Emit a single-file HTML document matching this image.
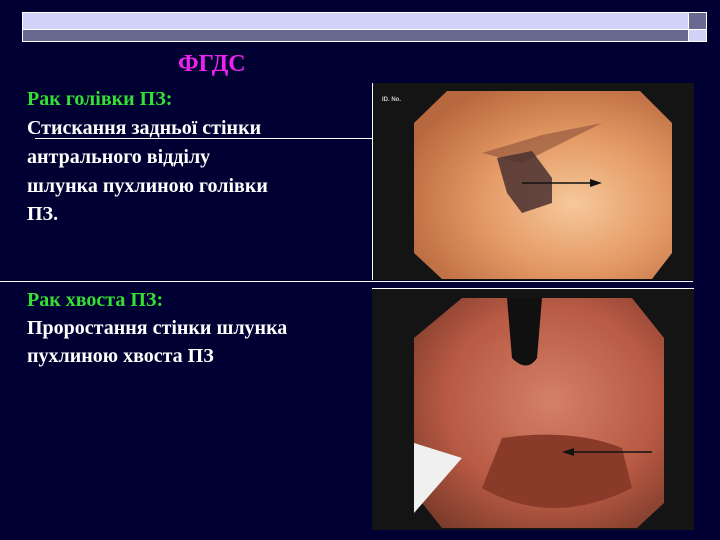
<!DOCTYPE html>
<html><head><meta charset="utf-8"><style>
body{margin:0;width:720px;height:540px;background:#000033;position:relative;overflow:hidden;font-family:"Liberation Serif","DejaVu Serif",serif;font-weight:bold}
.a{position:absolute}
.t{position:absolute;left:27px;font-size:20px;color:#fff;white-space:nowrap;line-height:22px}
.g{color:#33e033}
</style></head><body>
<div class="a" style="left:22px;top:12px;width:685px;height:30px;border:1px solid #fff;box-sizing:border-box;background:#686890"></div>
<div class="a" style="left:23px;top:13px;width:665px;height:16px;background:#d2d2f8"></div>
<div class="a" style="left:23px;top:29px;width:683px;height:1px;background:#fff"></div>
<div class="a" style="left:688px;top:13px;width:1px;height:28px;background:#fff"></div>
<div class="a" style="left:689px;top:13px;width:17px;height:16px;background:#686890"></div>
<div class="a" style="left:689px;top:30px;width:17px;height:11px;background:#d2d2f8"></div>

<div class="a" style="left:178px;top:51px;font-size:24px;color:#ee22ee">ФГДС</div>

<div class="t g" style="top:88px">Рак голівки ПЗ:</div>
<div class="t" style="top:117px">Стискання задньої стінки</div>
<div class="a" style="left:35px;top:138px;width:337px;height:1px;background:#fff"></div>
<div class="t" style="top:146px">антрального відділу</div>
<div class="t" style="top:175px">шлунка пухлиною голівки</div>
<div class="t" style="top:203px">ПЗ.</div>
<div class="a" style="left:0;top:281px;width:693px;height:1px;background:#fff"></div>
<div class="t g" style="top:289px">Рак хвоста ПЗ:</div>
<div class="t" style="top:317px">Проростання стінки шлунка</div>
<div class="t" style="top:345px">пухлиною хвоста ПЗ</div>

<svg class="a" style="left:372px;top:83px" width="322" height="197" viewBox="0 0 322 197">
<defs><radialGradient id="r1" cx="0.62" cy="0.6" r="0.7"><stop offset="0" stop-color="#f6c89a"/><stop offset="0.5" stop-color="#e49a66"/><stop offset="1" stop-color="#b8683e"/></radialGradient></defs>
<rect width="322" height="197" fill="#141414"/>
<rect x="0" width="1" height="197" fill="#fff"/>
<polygon points="75,8 268,8 300,40 300,170 280,196 70,196 42,170 42,40" fill="url(#r1)"/>
<path d="M110,70 L170,52 L230,40 L150,80 Z" fill="#8a5038" opacity="0.6"/>
<path d="M125,75 L160,68 L180,95 L180,120 L150,130 L135,110 Z" fill="#4a3030" opacity="0.85"/>
<line x1="150" y1="100" x2="225" y2="100" stroke="#111" stroke-width="1.5"/>
<polygon points="230,100 218,96 218,104" fill="#111"/>
<text x="10" y="18" font-size="6" fill="#ccc" font-family="Liberation Sans">ID. No.</text>
</svg>

<svg class="a" style="left:372px;top:288px" width="322" height="242" viewBox="0 0 322 242">
<defs><radialGradient id="r2" cx="0.55" cy="0.45" r="0.7"><stop offset="0" stop-color="#d48068"/><stop offset="0.6" stop-color="#b85a44"/><stop offset="1" stop-color="#7a3a2a"/></radialGradient></defs>
<rect width="322" height="242" fill="#141414"/>
<rect x="0" y="0" width="322" height="1" fill="#fff"/>
<polygon points="90,10 260,10 292,50 292,215 265,240 70,240 42,205 42,50" fill="url(#r2)"/>
<path d="M135,10 L170,10 L165,70 Q155,85 140,70 Z" fill="#101010"/>
<path d="M110,200 Q180,240 260,200 L250,160 Q200,140 130,150 Z" fill="#8a3a28"/>
<polygon points="42,155 90,170 42,225" fill="#f0f0f0"/>
<line x1="195" y1="164" x2="280" y2="164" stroke="#111" stroke-width="1.5"/>
<polygon points="190,164 202,160 202,168" fill="#111"/>
</svg>
</body></html>
